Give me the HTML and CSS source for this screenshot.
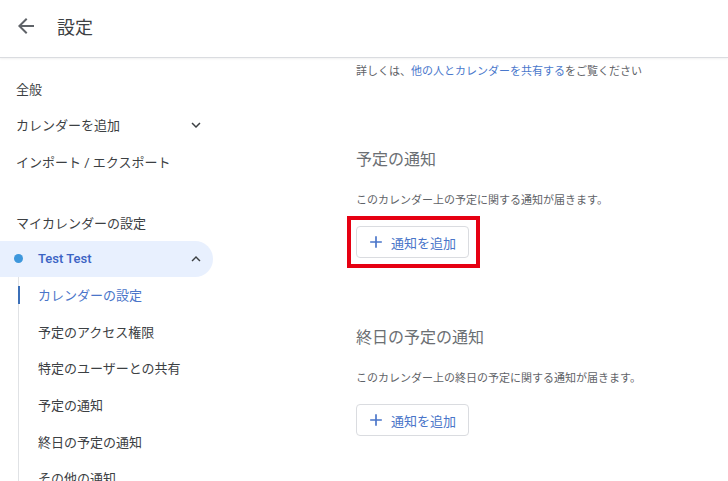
FILE: index.html
```html
<!DOCTYPE html>
<html lang="ja">
<head>
    <meta charset="UTF-8">
    <meta name="viewport" content="width=device-width, initial-scale=1.0">
    <title>設定</title>
    <link rel="stylesheet" href="styles.css">
</head>
<body>
    <!-- ヘッダー -->
    <header class="topbar">
        <span class="back">
            <svg width="24" height="24" viewBox="0 0 24 24"><path d="M20 11H7.83l5.59-5.59L12 4l-8 8 8 8 1.41-1.41L7.83 13H20v-2z" fill="#5f6368"/></svg>
        </span>
        <h1 class="title">設定</h1>
    </header>

    <div class="layout">
        <!-- サイドメニュー -->
        <nav class="sidebar">
            <div class="nav-item">全般</div>
            <div class="nav-item">
                カレンダーを追加
                <svg class="chev" width="18" height="18" viewBox="0 0 24 24"><path d="M7.41 8.59L12 13.17l4.59-4.58L18 10l-6 6-6-6 1.41-1.41z" fill="#3c4043"/></svg>
            </div>
            <div class="nav-item">インポート / エクスポート</div>

            <div class="nav-heading">マイカレンダーの設定</div>
            <div class="nav-cal">
                <span class="dot"></span>
                <span class="cal-name">Test Test</span>
                <svg class="chev" width="18" height="18" viewBox="0 0 24 24"><path d="M7.41 15.41L12 10.83l4.59 4.58L18 14l-6-6-6 6z" fill="#3c4043"/></svg>
            </div>
            <div class="sub-list">
                <div class="sub-item active">カレンダーの設定</div>
                <div class="sub-item">予定のアクセス権限</div>
                <div class="sub-item">特定のユーザーとの共有</div>
                <div class="sub-item">予定の通知</div>
                <div class="sub-item">終日の予定の通知</div>
                <div class="sub-item">その他の通知</div>
            </div>
        </nav>

        <!-- メイン -->
        <main class="content">
            <p class="note">詳しくは、<a href="#">他の人とカレンダーを共有する</a>をご覧ください</p>

            <h2 class="section-title">予定の通知</h2>
            <p class="desc">このカレンダー上の予定に関する通知が届きます。</p>
            <button class="add-btn marked">
                <svg width="20" height="20" viewBox="0 0 24 24"><path d="M19 13h-6v6h-2v-6H5v-2h6V5h2v6h6v2z" fill="#4a75c9"/></svg>
                通知を追加
            </button>

            <h2 class="section-title">終日の予定の通知</h2>
            <p class="desc">このカレンダー上の終日の予定に関する通知が届きます。</p>
            <button class="add-btn">
                <svg width="20" height="20" viewBox="0 0 24 24"><path d="M19 13h-6v6h-2v-6H5v-2h6V5h2v6h6v2z" fill="#4a75c9"/></svg>
                通知を追加
            </button>
        </main>
    </div>
</body>
</html>
```

FILE: styles.css
```css
body {
    margin: 0;
    font-family: Roboto, "Noto Sans CJK JP", sans-serif;
    color: #3c4043;
    background-color: #ffffff;
    height: 481px;
    overflow: hidden;
}
.topbar {
    height: 58px;
    box-sizing: border-box;
    padding-bottom: 5px;
    display: flex;
    align-items: center;
    border-bottom: 1px solid #dadce0;
    box-shadow: 0 1px 2px rgba(0, 0, 0, 0.06);
}
.back {
    width: 24px;
    height: 24px;
    margin-left: 14px;
}
.title {
    margin: 0 0 0 19px;
    font-size: 18px;
    font-weight: 400;
    color: #3c4043;
}
.layout {
    display: flex;
}
.sidebar {
    width: 213px;
    flex-shrink: 0;
    padding-top: 12px;
    font-size: 13px;
}
.nav-item {
    height: 36.5px;
    display: flex;
    align-items: center;
    justify-content: space-between;
    padding: 0 8px 0 16px;
}
.nav-heading {
    margin-top: 25px;
    height: 36px;
    display: flex;
    align-items: center;
    padding-left: 16px;
}
.nav-cal {
    height: 36px;
    display: flex;
    align-items: center;
    padding: 0 8px 0 14px;
    background-color: #e8f0fe;
    border-radius: 0 18px 18px 0;
}
.dot {
    width: 9px;
    height: 9px;
    border-radius: 50%;
    background-color: #3d97dc;
}
.cal-name {
    flex: 1;
    margin-left: 15px;
    font-weight: 500;
    color: #3b63c4;
}
.sub-list {
    margin-left: 18px;
    border-left: 1px solid #e0e2e5;
}
.sub-item {
    height: 36.6px;
    display: flex;
    align-items: center;
    padding-left: 19px;
}
.sub-item.active {
    color: #4a75c9;
    position: relative;
}
.sub-item.active::before {
    content: "";
    position: absolute;
    left: -1px;
    top: 9px;
    bottom: 9px;
    width: 2px;
    background-color: #3b6fb8;
}
.content {
    padding-left: 143px;
    padding-top: 6px;
}
.note {
    margin: 0;
    font-size: 11px;
    line-height: 16px;
    color: #5f6368;
}
.note a {
    color: #4a78cc;
    text-decoration: none;
}
.section-title {
    margin: 68px 0 0 0;
    font-size: 16px;
    line-height: 24px;
    font-weight: 400;
    color: #6b6f73;
}
.desc {
    margin: 21px 0 0 0;
    font-size: 11px;
    line-height: 16px;
    color: #5f6368;
}
.add-btn {
    margin-top: 17px;
    width: 113px;
    height: 32px;
    display: flex;
    align-items: center;
    padding: 0 0 0 9px;
    gap: 5px;
    border: 1px solid #dadce0;
    border-radius: 4px;
    background-color: #ffffff;
    font-family: Roboto, "Noto Sans CJK JP", sans-serif;
    font-size: 13px;
    color: #4a75c9;
    position: relative;
}
.add-btn svg {
    flex-shrink: 0;
}
.marked::after {
    content: "";
    position: absolute;
    left: -10px;
    right: -12px;
    top: -11px;
    bottom: -11px;
    border: 4px solid #e60012;
}
```
